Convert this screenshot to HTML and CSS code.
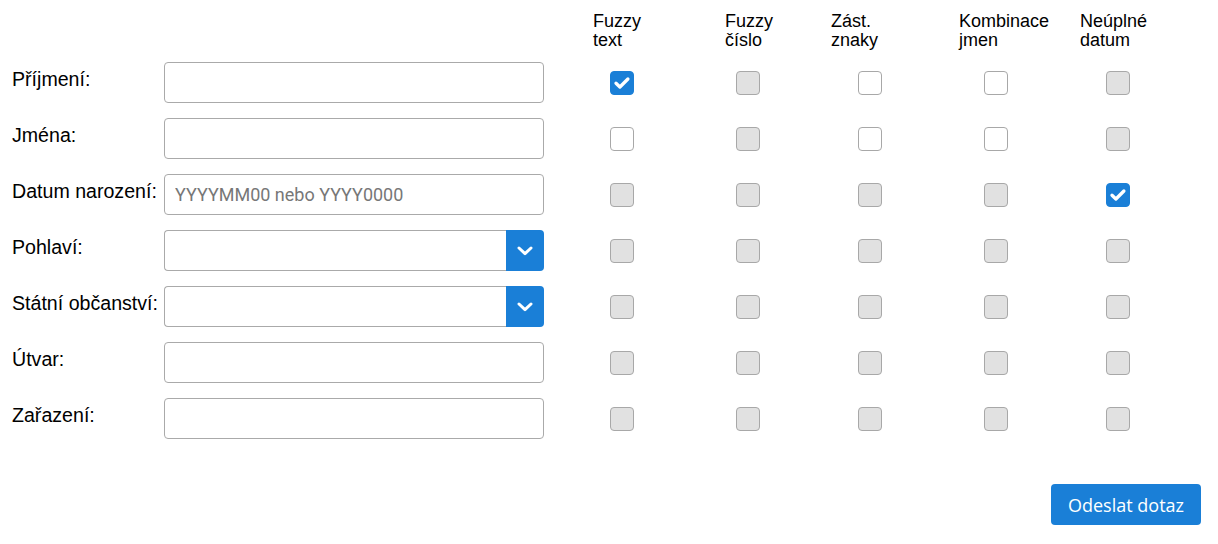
FILE: index.html
```html
<!DOCTYPE html>
<html lang="cs">
<head>
<meta charset="utf-8">
<title>Dotaz</title>
<link rel="stylesheet" href="styles.css">
</head>
<body>
<form class="form">
  <div class="grid">
    <div class="head c1">Fuzzy<br>text</div>
    <div class="head c2">Fuzzy<br>číslo</div>
    <div class="head c3">Zást.<br>znaky</div>
    <div class="head c4">Kombinace<br>jmen</div>
    <div class="head c5">Neúplné<br>datum</div>

    <label class="lbl">Příjmení:</label>
    <div class="field"><input class="inp" type="text"></div>
    <span class="cb c1 on"><svg viewBox="0 0 22 22"><path d="M5 11.2l3.9 3.8 8-8"/></svg></span>
    <span class="cb c2 dis"></span>
    <span class="cb c3"></span>
    <span class="cb c4"></span>
    <span class="cb c5 dis"></span>

    <label class="lbl">Jména:</label>
    <div class="field"><input class="inp" type="text"></div>
    <span class="cb c1"></span>
    <span class="cb c2 dis"></span>
    <span class="cb c3"></span>
    <span class="cb c4"></span>
    <span class="cb c5 dis"></span>

    <label class="lbl">Datum narození:</label>
    <div class="field"><input class="inp" type="text" placeholder="YYYYMM00 nebo YYYY0000"></div>
    <span class="cb c1 dis"></span>
    <span class="cb c2 dis"></span>
    <span class="cb c3 dis"></span>
    <span class="cb c4 dis"></span>
    <span class="cb c5 on"><svg viewBox="0 0 22 22"><path d="M5 11.2l3.9 3.8 8-8"/></svg></span>

    <label class="lbl">Pohlaví:</label>
    <div class="field sel"><input class="inp" type="text"><span class="drop"><svg viewBox="0 0 16 10"><path d="M2 2l6 5.6 6-5.6"/></svg></span></div>
    <span class="cb c1 dis"></span>
    <span class="cb c2 dis"></span>
    <span class="cb c3 dis"></span>
    <span class="cb c4 dis"></span>
    <span class="cb c5 dis"></span>

    <label class="lbl">Státní občanství:</label>
    <div class="field sel"><input class="inp" type="text"><span class="drop"><svg viewBox="0 0 16 10"><path d="M2 2l6 5.6 6-5.6"/></svg></span></div>
    <span class="cb c1 dis"></span>
    <span class="cb c2 dis"></span>
    <span class="cb c3 dis"></span>
    <span class="cb c4 dis"></span>
    <span class="cb c5 dis"></span>

    <label class="lbl">Útvar:</label>
    <div class="field"><input class="inp" type="text"></div>
    <span class="cb c1 dis"></span>
    <span class="cb c2 dis"></span>
    <span class="cb c3 dis"></span>
    <span class="cb c4 dis"></span>
    <span class="cb c5 dis"></span>

    <label class="lbl">Zařazení:</label>
    <div class="field"><input class="inp" type="text"></div>
    <span class="cb c1 dis"></span>
    <span class="cb c2 dis"></span>
    <span class="cb c3 dis"></span>
    <span class="cb c4 dis"></span>
    <span class="cb c5 dis"></span>
  </div>
  <div class="actions">
    <button class="btn" type="button">Odeslat dotaz</button>
  </div>
</form>
</body>
</html>
```

FILE: styles.css
```css
html, body {
  margin: 0;
  padding: 0;
  background: #ffffff;
}

body {
  font-family: "Liberation Sans", Arial, sans-serif;
  color: #000000;
}

.form {
  padding: 10px 0 0 11px;
}

.grid {
  display: grid;
  grid-template-columns: 153px 380px 181px 106px 128px 121px 1fr;
  grid-template-rows: 37px repeat(7, 41px);
  row-gap: 15px;
  align-items: center;
}

.head {
  align-self: start;
  padding-top: 2px;
  font-size: 18px;
  line-height: 19px;
  white-space: nowrap;
}

.head.c1 { grid-column: 3; padding-left: 49px; }
.head.c2 { grid-column: 4; }
.head.c3 { grid-column: 5; }
.head.c4 { grid-column: 6; }
.head.c5 { grid-column: 7; }

.lbl {
  grid-column: 1;
  align-self: start;
  padding-top: 7px;
  padding-left: 1px;
  font-size: 19.6px;
  line-height: 21px;
  white-space: nowrap;
}

.field {
  grid-column: 2;
  display: flex;
  height: 41px;
}

.inp {
  flex: 1;
  min-width: 0;
  box-sizing: border-box;
  height: 41px;
  margin: 0;
  padding: 0 10px;
  border: 1px solid #aaaaaa;
  border-radius: 4px;
  background: #ffffff;
  font-family: Roboto, "Liberation Sans", sans-serif;
  font-size: 18px;
  color: #222222;
  outline: none;
}

.inp::placeholder {
  color: #777777;
}

.sel .inp {
  border-radius: 4px 0 0 4px;
  border-right: 0;
}

.drop {
  width: 38px;
  height: 41px;
  background: #1a7fd7;
  border-radius: 0 4px 4px 0;
  display: flex;
  align-items: center;
  justify-content: center;
}

.drop svg {
  width: 16px;
  height: 10px;
  fill: none;
  stroke: #ffffff;
  stroke-width: 3;
  stroke-linecap: round;
  stroke-linejoin: round;
}

.cb {
  box-sizing: border-box;
  width: 24px;
  height: 24px;
  border: 1px solid #a8a8a8;
  border-radius: 4px;
  background: #ffffff;
  justify-self: start;
  display: flex;
  align-items: center;
  justify-content: center;
}

.cb.dis {
  background: #e1e1e1;
}

.cb.on {
  background: #1a7fd7;
  border-color: #1a7fd7;
}

.cb svg {
  flex: none;
  width: 22px;
  height: 22px;
  fill: none;
  stroke: #ffffff;
  stroke-width: 3.3;
  stroke-linecap: round;
  stroke-linejoin: round;
}

.cb.c1 { grid-column: 3; margin-left: 66px; }
.cb.c2 { grid-column: 4; margin-left: 11px; }
.cb.c3 { grid-column: 5; margin-left: 27px; }
.cb.c4 { grid-column: 6; margin-left: 25px; }
.cb.c5 { grid-column: 7; margin-left: 26px; }

.actions {
  display: flex;
  justify-content: flex-end;
  padding: 45px 17px 0 0;
}

.btn {
  width: 150px;
  height: 41px;
  border: 0;
  border-radius: 4px;
  background: #1a7fd7;
  color: #ffffff;
  font-family: "Open Sans", sans-serif;
  font-size: 18px;
  padding: 0;
  cursor: pointer;
}
```
